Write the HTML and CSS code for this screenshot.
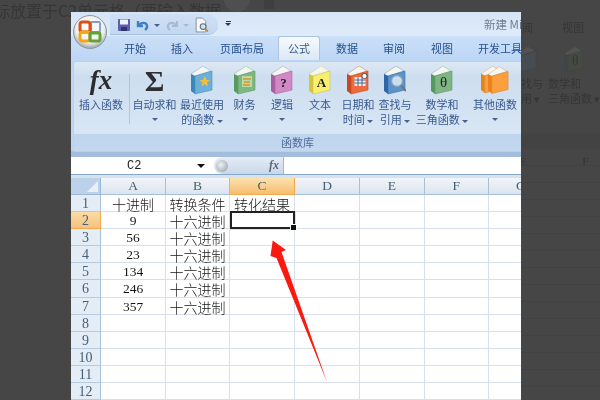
FILE: index.html
```html
<!DOCTYPE html>
<html lang="zh">
<head>
<meta charset="utf-8">
<title>公式 函数库</title>
<link rel="stylesheet" href="styles.css">
</head>
<body>
<svg class="defs" width="0" height="0" aria-hidden="true">
  <symbol id="book" viewBox="0 0 22 30">
    <polygon points="0,8 12,0 20,5 4,10" fill="var(--page, #f4f6f2)" stroke="var(--edge)" stroke-width=".35"/>
    <polygon points="0,8 4,10 4,28 0,25" fill="var(--spine)"/>
    <polygon points="4,10 21,5 21,24 4,28" fill="var(--cover)" stroke="var(--edge)" stroke-width=".6"/>
  </symbol>
</svg>
<main class="stage">
  <div class="ghost">
    <p class="ghost-line">标放置于C2单元格（要输入数据</p>
    <span class="ghost-orb"></span>
    <span class="ghost-save"></span>
    <span class="ghost-tab ghost-tab-a">阅</span>
    <span class="ghost-tab ghost-tab-b">视图</span>
    <svg class="ghost-book ghost-book-a" viewBox="0 0 22 30"><use href="#book"/></svg>
    <svg class="ghost-book ghost-book-b" viewBox="0 0 22 30"><use href="#book"/><text x="12.500" y="21" class="ghost-theta">θ</text></svg>
    <span class="ghost-label ghost-label-a">找与<br>用 ▾</span>
    <span class="ghost-label ghost-label-b">数学和<br>三角函数 ▾</span>
    <span class="ghost-band"></span>
    <span class="ghost-col ghost-col-a">E</span>
    <span class="ghost-col ghost-col-b">F</span>
    <span class="ghost-grid"></span>
  </div>

  <section class="window">
    <header class="title">
      <div class="qat">
        <svg class="qat-icon" viewBox="0 0 14 14"><rect x="1" y="1" width="12" height="12" rx="1" fill="#5b5fae"/><rect x="3" y="1.500" width="8" height="5" fill="#eef2fa"/><rect x="4" y="9" width="6" height="4" fill="#2f326f"/></svg>
        <svg class="qat-icon" viewBox="0 0 14 14"><path d="M2 3v5h5M3 7.500C5 4 10 4 11 7.500c.4 1.800-.6 3.500-2 4.500" fill="none" stroke="#3f7fc6" stroke-width="2.400"/></svg>
        <i class="caret qat-caret"></i>
        <svg class="qat-icon" viewBox="0 0 14 14"><path d="M12 3v5H7M11 7.500C9 4 4 4 3 7.500c-.4 1.800.6 3.500 2 4.500" fill="none" stroke="#a9bccf" stroke-width="2.200"/></svg>
        <i class="caret qat-caret faint"></i>
        <svg class="qat-icon page" viewBox="0 0 14 15"><path d="M2 1h6l3 3v10H2z" fill="#f7f8f4" stroke="#78889a" stroke-width=".8"/><circle cx="8.500" cy="9" r="2.700" fill="#cfe2ef" stroke="#5d6e7c"/><path d="M10.500 11l2.500 2.500" stroke="#b98a2d" stroke-width="1.600"/></svg>
      </div>
      <span class="qat-more"><i class="dash"></i><i class="caret dark"></i></span>
      <span class="doc-name">新建 Mi</span>
    </header>

    <nav class="tabs">
      <span class="tab">开始</span>
      <span class="tab">插入</span>
      <span class="tab">页面布局</span>
      <span class="tab active">公式</span>
      <span class="tab">数据</span>
      <span class="tab">审阅</span>
      <span class="tab">视图</span>
      <span class="tab">开发工具</span>
    </nav>

    <section class="ribbon">
      <div class="panel">
        <div class="tools">
          <div class="fn"><span class="icon fx">fx</span><span class="lbl">插入函数</span></div>
          <i class="sep"></i>
          <div class="fn"><span class="icon sigma">Σ</span><span class="lbl">自动求和</span><i class="caret"></i></div>
          <div class="fn">
            <svg class="icon book blue" viewBox="0 0 22 32"><use href="#book" width="22" height="30" y="1"/><polygon points="14,11 15.500,15 19,15 16,17.500 17,21.500 13.500,19 10.500,21.500 11.500,17.500 8.500,15 12,15" fill="#f3bf3a"/></svg>
            <span class="lbl">最近使用</span><span class="lbl">的函数 <i class="caret"></i></span>
          </div>
          <div class="fn">
            <svg class="icon book green" viewBox="0 0 22 32"><use href="#book" width="22" height="30" y="1"/><rect x="8" y="11" width="10" height="11" fill="#bcd7a8"/><path d="M9 14h8M10 17h6M9 20h7" stroke="#d29a24" stroke-width="1.500"/></svg>
            <span class="lbl">财务</span><i class="caret"></i>
          </div>
          <div class="fn">
            <svg class="icon book pink" viewBox="0 0 22 32"><use href="#book" width="22" height="30" y="1"/><text x="12.500" y="22" class="glyph">?</text></svg>
            <span class="lbl">逻辑</span><i class="caret"></i>
          </div>
          <div class="fn">
            <svg class="icon book yellow" viewBox="0 0 22 32"><use href="#book" width="22" height="30" y="1"/><text x="12.500" y="22" class="glyph">A</text></svg>
            <span class="lbl">文本</span><i class="caret"></i>
          </div>
          <div class="fn">
            <svg class="icon book red" viewBox="0 0 22 32"><use href="#book" width="22" height="30" y="1"/><rect x="7.500" y="12" width="11" height="9" fill="#eef1f6"/><path d="M7.500 15h11M7.500 18h11M11 12v9M15 12v9" stroke="#41527d" stroke-width=".9"/><circle cx="17.500" cy="11" r="2.600" fill="#fff" stroke="#333" stroke-width=".8"/></svg>
            <span class="lbl">日期和</span><span class="lbl">时间 <i class="caret"></i></span>
          </div>
          <div class="fn">
            <svg class="icon book navy" viewBox="0 0 22 32"><use href="#book" width="22" height="30" y="1"/><circle cx="13" cy="16" r="5.500" fill="#c9deee" stroke="#8ba3b8" stroke-width="1.300"/><path d="M17 20.500l5 5.500" stroke="#6f7680" stroke-width="2"/></svg>
            <span class="lbl">查找与</span><span class="lbl">引用 <i class="caret"></i></span>
          </div>
          <div class="fn">
            <svg class="icon book sage" viewBox="0 0 22 32"><use href="#book" width="22" height="30" y="1"/><text x="12.500" y="22" class="glyph theta">θ</text></svg>
            <span class="lbl">数学和</span><span class="lbl">三角函数 <i class="caret"></i></span>
          </div>
          <div class="fn">
            <svg class="icon books" viewBox="0 0 28 32"><use href="#book" class="orange" x="0" y="1" width="21" height="29"/><use href="#book" class="orange" x="7" y="1" width="21" height="30"/></svg>
            <span class="lbl">其他函数</span><i class="caret"></i>
          </div>
        </div>
        <div class="group-name">函数库</div>
      </div>
    </section>

    <div class="formula">
      <div class="name-box"><span class="name">C2</span><i class="caret dark big"></i></div>
      <div class="fx-pill"><i class="knob"></i><span class="fx-mini">fx</span></div>
      <div class="input"></div>
    </div>

    <div class="sheet">
      <div class="corner"></div><div class="ch">A</div><div class="ch">B</div><div class="ch on">C</div><div class="ch">D</div><div class="ch">E</div><div class="ch">F</div><div class="ch">G</div>
      <div class="rh">1</div><div class="c">十进制</div><div class="c">转换条件</div><div class="c">转化结果</div><div class="c"></div><div class="c"></div><div class="c"></div><div class="c"></div>
      <div class="rh on">2</div><div class="c num">9</div><div class="c">十六进制</div><div class="c selected"></div><div class="c"></div><div class="c"></div><div class="c"></div><div class="c"></div>
      <div class="rh">3</div><div class="c num">56</div><div class="c">十六进制</div><div class="c"></div><div class="c"></div><div class="c"></div><div class="c"></div><div class="c"></div>
      <div class="rh">4</div><div class="c num">23</div><div class="c">十六进制</div><div class="c"></div><div class="c"></div><div class="c"></div><div class="c"></div><div class="c"></div>
      <div class="rh">5</div><div class="c num">134</div><div class="c">十六进制</div><div class="c"></div><div class="c"></div><div class="c"></div><div class="c"></div><div class="c"></div>
      <div class="rh">6</div><div class="c num">246</div><div class="c">十六进制</div><div class="c"></div><div class="c"></div><div class="c"></div><div class="c"></div><div class="c"></div>
      <div class="rh">7</div><div class="c num">357</div><div class="c">十六进制</div><div class="c"></div><div class="c"></div><div class="c"></div><div class="c"></div><div class="c"></div>
      <div class="rh">8</div><div class="c"></div><div class="c"></div><div class="c"></div><div class="c"></div><div class="c"></div><div class="c"></div><div class="c"></div>
      <div class="rh">9</div><div class="c"></div><div class="c"></div><div class="c"></div><div class="c"></div><div class="c"></div><div class="c"></div><div class="c"></div>
      <div class="rh">10</div><div class="c"></div><div class="c"></div><div class="c"></div><div class="c"></div><div class="c"></div><div class="c"></div><div class="c"></div>
      <div class="rh">11</div><div class="c"></div><div class="c"></div><div class="c"></div><div class="c"></div><div class="c"></div><div class="c"></div><div class="c"></div>
      <div class="rh">12</div><div class="c"></div><div class="c"></div><div class="c"></div><div class="c"></div><div class="c"></div><div class="c"></div><div class="c"></div>
    </div>

    <div class="orb">
      <svg viewBox="0 0 34 34" class="orb-svg">
        <defs>
          <radialGradient id="orbFill" cx=".5" cy=".4" r=".6"><stop offset="0" stop-color="#fff"/><stop offset=".7" stop-color="#eef0ee"/><stop offset="1" stop-color="#9aa3a8"/></radialGradient>
        </defs>
        <circle cx="17" cy="17" r="16.500" fill="url(#orbFill)" stroke="#8e979f"/>
        <rect x="18" y="7" width="9" height="10" rx="1" fill="none" stroke="#7f9ccc" stroke-width="1.800"/>
        <rect x="7" y="7" width="10" height="10" rx="2.500" fill="none" stroke="#dc5016" stroke-width="3"/>
        <rect x="7" y="17" width="10" height="9" rx="2.500" fill="none" stroke="#f2a60f" stroke-width="3"/>
        <rect x="17" y="18" width="10" height="8" rx="1.500" fill="none" stroke="#62a336" stroke-width="3"/>
      </svg>
    </div>
  </section>

  <svg class="arrow" viewBox="0 0 600 400" aria-hidden="true">
    <polygon points="272.700,240.500 286,250 281.500,252 327,382 276.500,258 270.500,256" fill="#fb1a10"/>
  </svg>
</main>
</body>
</html>
```
FILE: styles.css
```css
* { box-sizing: border-box; }
html, body { margin: 0; padding: 0; }
body { width: 600px; height: 400px; overflow: hidden; background: #464646; }
.defs { position: absolute; }

.stage {
  position: relative;
  width: 600px;
  height: 400px;
  overflow: hidden;
  background: #464646;
  font-family: "Noto Sans CJK SC", "Liberation Sans", sans-serif;
}

/* the dimmed page behind the enlarged picture */
.ghost { position: absolute; inset: 0; color: #363636; filter: blur(.6px); }
.ghost-line { position: absolute; left: -6px; top: 0; margin: 0; font-size: 16px; line-height: 20px; white-space: nowrap; }
.ghost-orb { position: absolute; left: 224px; top: -6px; width: 26px; height: 18px; border-radius: 0 0 13px 13px; background: #4f4f4f; }
.ghost-save { position: absolute; left: 264px; top: 0; width: 10px; height: 9px; background: #3f3f3f; }
.ghost-tab { position: absolute; top: 19px; font-size: 11px; line-height: 16px; }
.ghost-tab-a { left: 522px; }
.ghost-tab-b { left: 562px; }
.ghost-book {
  position: absolute;
  top: 46px;
  width: 20px;
  height: 28px;
  --page: #525252;
  --cover: #474c52;
  --spine: #404448;
  --edge: #434343;
}
.ghost-book-a { left: 517px; }
.ghost-book-b { left: 564px; --cover: #454b42; }
.ghost-theta { font-family: "Liberation Serif", serif; font-size: 15px; text-anchor: middle; fill: #363636; }
.ghost-label { position: absolute; top: 76px; font-size: 11px; line-height: 15px; white-space: nowrap; }
.ghost-label-a { left: 521px; }
.ghost-label-b { left: 548px; }
.ghost-band { position: absolute; left: 521px; right: 0; top: 133px; height: 16px; background: #434343; }
.ghost-col { position: absolute; top: 154px; font-family: "Liberation Serif", serif; font-size: 13px; line-height: 16px; }
.ghost-col-a { left: 519px; }
.ghost-col-b { left: 582px; }
.ghost-grid { position: absolute; left: 521px; right: 0; top: 149px; height: 251px; background: repeating-linear-gradient(180deg, transparent 0 16px, #424242 16px 17px); }

/* spreadsheet window */
.window {
  position: absolute;
  left: 71px;
  top: 12px;
  width: 450px;
  height: 388px;
  overflow: hidden;
  display: flex;
  flex-direction: column;
  background: #fff;
  filter: blur(.35px);
}

.title {
  height: 24px;
  flex: none;
  display: flex;
  align-items: flex-start;
  background: linear-gradient(180deg, #d5e4f6 0, #dfebfa 100%);
  padding-left: 39px;
}
.qat {
  width: 108px;
  height: 20px;
  margin-top: 2px;
  padding: 2px 0 0 7px;
  display: flex;
  align-items: center;
  gap: 5px;
  border-radius: 0 11px 11px 0;
  background: linear-gradient(180deg, #cfe0f4, #c2d8f1);
  box-shadow: 0 1px 0 #a9c3e0;
}
.qat-icon { width: 14px; height: 14px; flex: none; }
.qat-icon.page { width: 15px; height: 16px; }
.caret {
  display: inline-block;
  width: 0; height: 0;
  border-left: 3px solid transparent;
  border-right: 3px solid transparent;
  border-top: 3px solid #47618a;
  vertical-align: middle;
}
.caret.dark { border-top-color: #2b3a50; }
.caret.faint { border-top-color: #a9bccf; }
.qat-caret { margin-left: -1px; }
.qat-more { display: flex; flex-direction: column; align-items: center; gap: 1px; margin: 9px 0 0 7px; }
.dash { display: block; width: 5px; height: 1px; background: #2b3a50; }
.doc-name { margin-left: auto; margin-right: -7px; width: 44px; white-space: nowrap; font-size: 11.500px; line-height: 24px; color: #6f7f92; }

.tabs {
  height: 24px;
  flex: none;
  display: grid;
  grid-template-columns: 46px 48px 72px 42px 54px 40px 56px 60px;
  padding-left: 41px;
  background: linear-gradient(180deg, #cbe0f8, #bcd6f5);
  font-size: 11px;
  color: #254f8c;
}
.tab { line-height: 24px; text-align: center; white-space: nowrap; }
.tab.active {
  background: linear-gradient(180deg, #f7fafd, #dbe8f6);
  border: 1px solid #a9c5e2;
  border-bottom: 0;
  border-radius: 3px 3px 0 0;
  color: #3d5a80;
  line-height: 23px;
}

.ribbon { height: 97px; flex: none; padding: 1px 0 5px 2px; background: linear-gradient(180deg, #bcd6f5 0, #bcd6f5 90px, #a3bedc 92px); }
.panel {
  height: 91px;
  display: flex;
  flex-direction: column;
  border: 1px solid #bad1e9;
  border-right: 0;
  border-radius: 3px 0 0 3px;
  background: linear-gradient(180deg, #dde8f4 0, #d2e0f0 12px, #cddef0 14px, #d8e6f4 72px);
}
.tools {
  height: 72px;
  flex: none;
  display: grid;
  grid-template-columns: 54px 3px 47px 48px 37px 38px 38px 38px 36px 58px 48px;
  padding-top: 3px;
}
.fn { display: flex; flex-direction: column; align-items: center; min-width: 0; }
.icon { display: block; height: 32px; flex: none; }
.book { width: 22px; }
.lbl { font-size: 11px; line-height: 15px; color: #38598e; white-space: nowrap; }
.fn > .caret { margin-top: 6px; }
.sep { display: block; width: 1px; height: 50px; margin: 9px 1px 0; background: #b1c5dc; }
.fx {
  font-family: "Liberation Serif", serif;
  font-style: italic;
  font-weight: 700;
  font-size: 27px;
  line-height: 31px;
  color: #2c2c2c;
}
.sigma {
  font-family: "Liberation Serif", serif;
  font-size: 30px;
  font-weight: 700;
  line-height: 31px;
  color: #2f2f2f;
}
.glyph { font-family: "Liberation Serif", serif; font-size: 13px; font-weight: 700; text-anchor: middle; fill: #222; }
.glyph.theta { font-size: 15px; font-weight: 400; }
.blue { --cover: #6cb0d9; --spine: #3d86ba; --edge: #4a8fbe; }
.green { --cover: #7fb780; --spine: #559a60; --edge: #5b9c66; }
.pink { --cover: #d188c4; --spine: #a75fa0; --edge: #ab6aa6; }
.yellow { --cover: #f8ef70; --spine: #d5c63a; --edge: #cfc44a; }
.red { --cover: #ec6a3c; --spine: #c9481f; --edge: #c9481f; }
.navy { --cover: #5b93cb; --spine: #2d65a5; --edge: #3a70ab; }
.sage { --cover: #7fb582; --spine: #559860; --edge: #5b9a66; }
.books { width: 28px; }
.orange { --cover: #fb9f3f; --spine: #e8831c; --edge: #dd8122; }
.group-name {
  height: 17px;
  background: linear-gradient(180deg, #bed5ee, #c3d8ef);
  text-align: center;
  font-size: 11px;
  line-height: 17px;
  color: #4c6c9a;
}

.formula {
  height: 18px;
  flex: none;
  display: flex;
  background: #fff;
  border-bottom: 1px solid #86a8ca;
}
.name-box { width: 141px; flex: none; display: flex; align-items: center; font-family: "Liberation Mono", monospace; font-size: 12px; color: #222; }
.name { margin-left: 56px; width: 72px; }
.caret.big { border-left-width: 4px; border-right-width: 4px; border-top-width: 4px; border-top-color: #111; margin-left: -2px; }
.fx-pill {
  width: 70px;
  flex: none;
  margin-left: 2px;
  display: flex;
  align-items: center;
  justify-content: space-between;
  padding: 0 4px 0 2px;
  border-radius: 9px 0 0 9px;
  border-right: 1px solid #9fb7d0;
  background: linear-gradient(180deg, #e4ecf5, #c8d8e9);
}
.knob { width: 12px; height: 12px; border-radius: 50%; background: radial-gradient(circle at 40% 40%, #f0f0f0, #8e9aa6); }
.fx-mini { font-family: "Liberation Serif", serif; font-style: italic; font-weight: 700; font-size: 12px; color: #5b6873; }
.input { flex: 1; }

.sheet {
  flex: 1;
  display: grid;
  grid-template-columns: 30px 65px 64px 65px 65px 64.500px 64.500px 64.500px;
  grid-template-rows: 17px repeat(12, 17.100px);
  background: #fff;
  border-top: 3px solid #d5e2f0;
  overflow: hidden;
}
.corner {
  position: relative;
  background: #bcd2eb;
  border-right: 1px solid #9db8d6;
  border-bottom: 1px solid #9db8d6;
}
.corner::after {
  content: "";
  position: absolute;
  right: 2px;
  bottom: 2px;
  border-left: 11px solid transparent;
  border-bottom: 11px solid #e9f0f8;
}
.ch {
  text-align: center;
  font-family: "Liberation Serif", serif;
  font-size: 13.500px;
  line-height: 16px;
  color: #46606f;
  background: linear-gradient(180deg, #f2f5f9, #dbe4ef);
  border-right: 1px solid #a7c0da;
  border-bottom: 1px solid #a7c0da;
}
.ch.on { background: linear-gradient(180deg, #fbe2b0, #f6bd6e); border-color: #f2a94e; }
.rh {
  text-align: center;
  font-family: "Liberation Serif", serif;
  font-size: 14px;
  line-height: 17px;
  color: #45607a;
  background: #e4ecf6;
  border-right: 1px solid #a7c0da;
  border-bottom: 1px solid #b5c9df;
}
.rh.on { background: linear-gradient(180deg, #fbdca6, #f6c27c); border-color: #f2a94e; }
.c {
  position: relative;
  padding-top: 1px;
  text-align: center;
  font-size: 14px;
  font-weight: 300;
  line-height: 16px;
  color: #151515;
  white-space: nowrap;
  border-right: 1px solid #d7e0ec;
  border-bottom: 1px solid #d7e0ec;
}
.c.num { font-family: "Liberation Serif", serif; font-size: 13.500px; }
.c.selected { box-shadow: inset 0 0 0 2px #222; margin: -1px -1px -1px 0; z-index: 1; }
.c.selected::after {
  content: "";
  position: absolute;
  right: -2px;
  bottom: -2px;
  width: 5px;
  height: 5px;
  background: #111;
  border: 1px solid #fff;
}

.orb { position: absolute; left: 2px; top: 3px; width: 34px; height: 34px; }
.orb-svg { display: block; width: 34px; height: 34px; }

.arrow { position: absolute; inset: 0; width: 600px; height: 400px; pointer-events: none; }
```
